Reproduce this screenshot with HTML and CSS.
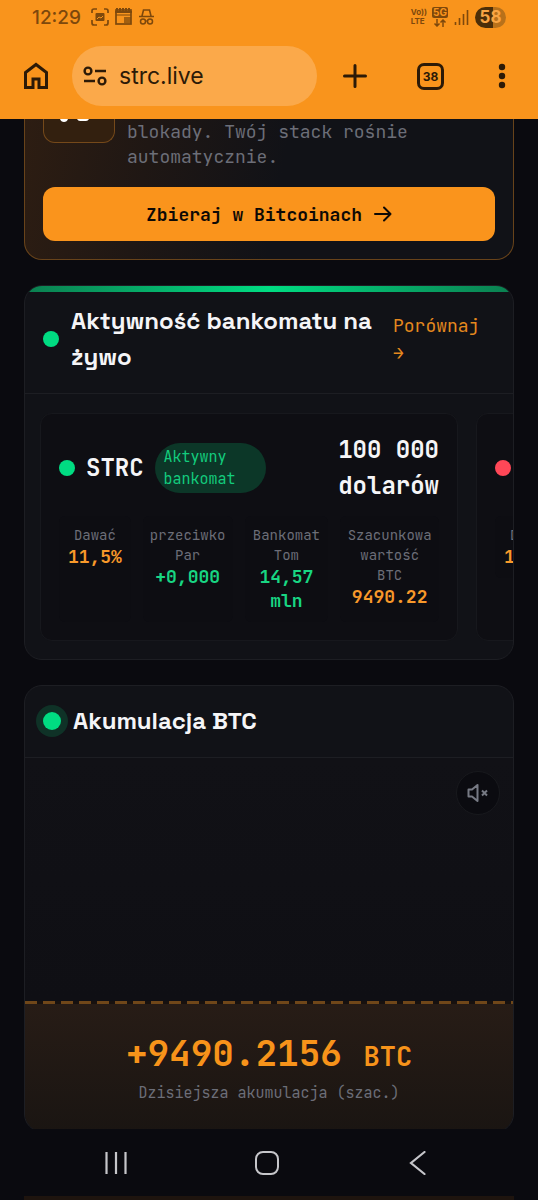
FILE: index.html
```html
<!DOCTYPE html>
<html lang="pl">
<head>
<meta charset="utf-8">
<meta name="viewport" content="width=device-width, initial-scale=1">
<title>strc.live</title>
<link rel="stylesheet" href="styles.css">
</head>
<body>
<div class="phone">
  <header class="browser">
    <div class="status">
      <span class="time">12:29</span>
      <svg class="status-left" width="64" height="20" viewBox="0 0 64 20" fill="none" stroke="currentColor" stroke-width="1.7" aria-hidden="true">
        <path d="M1 6V4q0-2 2-2h3M13 2h2q2 0 2 2v2M17 13v3q0 2-2 2h-2M6 18H3q-2 0-2-2v-3"/>
        <rect x="4.500" y="6" width="9" height="8" rx="1" fill="currentColor" stroke="none"/>
        <path d="M6 12l2-2 2 1 2-2" stroke="#f9941c" stroke-width="1"/>
        <rect x="25" y="3" width="15" height="14"/>
        <path d="M24 5h17M26 1v3M29 1v3M32 1v3M35 1v3M38 1v3" stroke-width="2"/>
        <path d="M25 8h15" stroke-width="1"/>
        <rect x="33" y="10" width="7" height="6" fill="currentColor" fill-opacity=".7" stroke="none"/>
        <path d="M48 9.500h15M51 9l1.500-6h6l1.500 6" stroke-width="1.600"/>
        <circle cx="52" cy="14.500" r="2.500" stroke-width="1.500"/>
        <circle cx="59" cy="14.500" r="2.500" stroke-width="1.500"/>
        <path d="M54 14h3" stroke-width="1.200"/>
      </svg>
      <span class="spacer"></span>
      <span class="volte"><span>Vo))</span><span>LTE</span></span>
      <span class="fiveg">
        <span class="fiveg-tag">5G</span>
        <svg width="14" height="8" viewBox="0 0 14 8" fill="none" stroke="currentColor" stroke-width="1.500" aria-hidden="true"><path d="M4 0v7M1.500 4.500L4 7l2.500-2.500M10 8V1M7.500 3.500L10 1l2.500 2.500"/></svg>
      </span>
      <svg class="signal" width="15" height="16" viewBox="0 0 15 16" fill="none" stroke="currentColor" stroke-width="1.600" aria-hidden="true"><path d="M1.500 16v-3M5.500 16V9M9.500 16V5M13.500 16V1"/></svg>
      <span class="battery">58</span>
    </div>
    <div class="toolbar">
      <button class="icon-btn" type="button" aria-label="Strona główna">
        <svg width="26" height="28" viewBox="0 0 26 28" fill="none" stroke="currentColor" stroke-width="3" aria-hidden="true"><path d="M2.500 25.500V10.500L13 2.500l10.500 8v15H16v-8.500h-6v8.500z"/></svg>
      </button>
      <button class="address" type="button">
        <svg width="24" height="20" viewBox="0 0 24 20" fill="none" stroke="currentColor" stroke-width="2.400" aria-hidden="true"><circle cx="5" cy="5" r="3.400"/><path d="M12 5h11M1 15h11"/><circle cx="19" cy="15" r="3.400"/></svg>
        <span>strc.live</span>
      </button>
      <button class="icon-btn" type="button" aria-label="Nowa karta">
        <svg width="24" height="24" viewBox="0 0 24 24" stroke="currentColor" stroke-width="3" stroke-linecap="round" aria-hidden="true"><path d="M12 1.500v21M1.500 12h21"/></svg>
      </button>
      <button class="tabs" type="button" aria-label="Karty: 38">38</button>
      <button class="icon-btn" type="button" aria-label="Menu">
        <svg width="8" height="26" viewBox="0 0 8 26" fill="currentColor" aria-hidden="true"><circle cx="4" cy="4" r="3.200"/><circle cx="4" cy="13" r="3.200"/><circle cx="4" cy="22" r="3.200"/></svg>
      </button>
    </div>
  </header>

  <main class="content">
    <section class="card promo">
      <div class="promo-row">
        <div class="promo-icon">
          <svg width="36" height="4" viewBox="0 0 36 4" fill="#fff" aria-hidden="true"><path d="M0 0h8q-1 3-4 3t-4-3zM17 0h12q-1 2-3 2h-6q-2 0-3-2z"/></svg>
        </div>
        <p class="promo-text">blokady. Twój stack rośnie automatycznie.</p>
      </div>
      <button class="cta" type="button">
        <span>Zbieraj w Bitcoinach</span>
        <svg width="18" height="16" viewBox="0 0 18 16" fill="none" stroke="currentColor" stroke-width="2" stroke-linecap="round" stroke-linejoin="round" aria-hidden="true"><path d="M1 8h15.500M10 1.500L16.500 8 10 14.500"/></svg>
      </button>
    </section>

    <section class="card activity">
      <div class="card-head">
        <span class="dot"></span>
        <h2 class="title">Aktywność bankomatu na żywo</h2>
        <a class="compare" href="#">Porównaj →</a>
      </div>
      <div class="scroller">
        <article class="ticker">
          <div class="ticker-head">
            <span class="dot"></span>
            <span class="symbol">STRC</span>
            <span class="pill">Aktywny bankomat</span>
            <span class="amount">100 000 dolarów</span>
          </div>
          <dl class="metrics">
            <div class="metric"><dt>Dawać</dt><dd class="orange">11,5%</dd></div>
            <div class="metric"><dt>przeciwko Par</dt><dd class="green">+0,000</dd></div>
            <div class="metric"><dt>Bankomat Tom</dt><dd class="green">14,57 mln</dd></div>
            <div class="metric"><dt>Szacunkowa wartość BTC</dt><dd class="orange">9490.22</dd></div>
          </dl>
        </article>
        <article class="ticker">
          <div class="ticker-head">
            <span class="dot red"></span>
          </div>
          <dl class="metrics">
            <div class="metric"><dt>Dawać</dt><dd class="orange">10,0%</dd></div>
          </dl>
        </article>
      </div>
    </section>

    <section class="card accumulation">
      <div class="card-head">
        <span class="dot halo"></span>
        <h2 class="title">Akumulacja BTC</h2>
      </div>
      <div class="stage">
        <button class="mute" type="button" aria-label="Włącz dźwięk">
          <svg width="22" height="20" viewBox="0 0 22 20" fill="none" stroke="currentColor" stroke-width="2" stroke-linejoin="round" aria-hidden="true"><path d="M1.500 6.500H5L10.500 2v16L5 13.500H1.500z"/><path d="M15 7.500l5 5M20 7.500l-5 5"/></svg>
        </button>
      </div>
      <div class="dashes"></div>
      <div class="total">
        <div class="total-value">+9490.2156 <span class="unit">BTC</span></div>
        <div class="total-label">Dzisiejsza akumulacja (szac.)</div>
      </div>
    </section>
  </main>

  <nav class="system-nav">
    <button class="nav-btn" type="button" aria-label="Ostatnie">
      <svg width="24" height="24" viewBox="0 0 24 24" stroke="currentColor" stroke-width="2.200" aria-hidden="true"><path d="M2.500 1v22M12 1v22M21.500 1v22"/></svg>
    </button>
    <button class="nav-btn" type="button" aria-label="Ekran główny">
      <svg width="24" height="24" viewBox="0 0 24 24" fill="none" stroke="currentColor" stroke-width="2" aria-hidden="true"><rect x="1" y="1" width="22" height="22" rx="7"/></svg>
    </button>
    <button class="nav-btn" type="button" aria-label="Wstecz">
      <svg width="24" height="24" viewBox="0 0 24 24" fill="none" stroke="currentColor" stroke-width="2.200" stroke-linecap="round" aria-hidden="true"><path d="M18.500 1L5 12l13.500 11"/></svg>
    </button>
  </nav>
  <div class="underlay"></div>
</div>
</body>
</html>
```
FILE: styles.css
```css
* { box-sizing: border-box; }

:root {
  --bg: #0a0a0f;
  --card: #111217;
  --inner: #0e0e13;
  --line: #1d1e23;
  --orange: #f7931a;
  --green: #00dc82;
  --muted: #6c6e78;
  --mono: "JetBrains Mono", "DejaVu Sans Mono", monospace;
  --sans: "Space Grotesk", Inter, sans-serif;
}

body {
  margin: 0;
  background: var(--bg);
  color: #f5f5f7;
  font-family: var(--mono);
}

button {
  margin: 0;
  padding: 0;
  border: 0;
  background: none;
  color: inherit;
  font: inherit;
}

svg { display: block; flex: none; }

.phone {
  display: flex;
  flex-direction: column;
  height: 100vh;
}

/* browser chrome */
.browser {
  flex: none;
  background: #f9941c;
  color: #2c1a07;
  font-family: Inter, sans-serif;
  padding-bottom: 13px;
}

.status {
  display: flex;
  align-items: center;
  height: 34px;
  padding: 0 32px;
  color: #7d480c;
}

.time { font-size: 19px; font-weight: 500; margin-right: 10px; }
.spacer { flex: 1; }

.volte {
  display: flex;
  flex-direction: column;
  font-size: 8px;
  line-height: 9px;
  font-weight: 700;
  margin-right: 5px;
}

.fiveg {
  display: flex;
  flex-direction: column;
  align-items: center;
  margin-right: 6px;
}

.fiveg-tag {
  width: 16px;
  height: 11px;
  margin-bottom: 1px;
  border-radius: 2px;
  background: #7d480c;
  color: #f9941c;
  font-size: 10px;
  line-height: 11px;
  font-weight: 700;
  text-align: center;
}

.signal { margin-right: 6px; }

.battery {
  width: 31px;
  height: 21px;
  border-radius: 11px;
  background: linear-gradient(90deg, #4c2e08 58%, #b8711a 58%);
  color: #f9a544;
  font-size: 17px;
  line-height: 21px;
  font-weight: 700;
  text-align: center;
}

.toolbar {
  display: flex;
  align-items: center;
  height: 72px;
  padding: 12px 32px 0 23px;
}

.icon-btn { display: flex; }

.address {
  flex: 1;
  display: flex;
  align-items: center;
  gap: 12px;
  height: 60px;
  margin: 0 26px 0 23px;
  padding: 0 11px;
  border-radius: 30px;
  background: #fba94a;
  font-size: 23px;
}

.tabs {
  width: 27px;
  height: 27px;
  margin: 0 54px 0 50px;
  border: 3px solid currentColor;
  border-radius: 7px;
  font-size: 12px;
  line-height: 21px;
  font-weight: 700;
}

/* page */
.content {
  flex: 1;
  min-height: 0;
  overflow: hidden;
  display: flex;
  flex-direction: column;
  gap: 25px;
  padding: 0 24px;
}

.card {
  position: relative;
  flex: none;
  overflow: hidden;
  border: 1px solid var(--line);
  border-radius: 18px;
  background: var(--card);
}

.promo {
  border-color: #68431a;
  border-top: 0;
  border-radius: 0 0 18px 18px;
  padding: 0 18px 18px;
  background: linear-gradient(100deg, #2d1d12 0%, #1f1714 25%, #111217 52%);
}

.promo-row {
  display: flex;
  align-items: flex-start;
  gap: 12px;
  padding-bottom: 18px;
}

.promo-icon {
  flex: none;
  display: flex;
  width: 72px;
  height: 24px;
  padding-left: 16px;
  border: 1px solid #75491a;
  border-top: 0;
  border-radius: 0 0 12px 12px;
  background: #33200f;
}

.promo-text {
  margin: 0;
  font-size: 18px;
  line-height: 25px;
  color: var(--muted);
}

.cta {
  display: flex;
  align-items: center;
  justify-content: center;
  gap: 12px;
  width: 100%;
  height: 54px;
  border-radius: 12px;
  background: #fa941c;
  color: #0d0905;
  font-size: 18px;
  font-weight: 700;
}

.activity::before {
  content: "";
  position: absolute;
  inset: 0 0 auto;
  height: 6px;
  background: linear-gradient(90deg, #0b7f50, #00dc82 50%, #0b7f50);
}

.card-head {
  display: flex;
  align-items: center;
  gap: 12px;
  padding: 17px 18px 18px;
  border-bottom: 1px solid var(--line);
}

.dot {
  flex: none;
  width: 16px;
  height: 16px;
  border-radius: 50%;
  background: var(--green);
}

.dot.red { background: #ff4757; }

.dot.halo {
  width: 18px;
  height: 18px;
  box-shadow: 0 0 0 7px #0f3227;
}

.title {
  flex: 1;
  margin: 0;
  font-family: var(--sans);
  font-size: 24px;
  line-height: 36px;
  font-weight: 600;
}

.compare {
  flex: none;
  width: 102px;
  font-size: 18px;
  line-height: 27px;
  color: #e5891e;
  text-decoration: none;
}

.scroller {
  display: flex;
  gap: 18px;
  padding: 19px 15px 18px;
  overflow: hidden;
}

.ticker {
  flex: none;
  width: 418px;
  padding: 18px;
  border: 1px solid #17181d;
  border-radius: 12px;
  background: var(--inner);
}

.ticker-head {
  display: flex;
  align-items: center;
  gap: 11px;
  min-height: 72px;
}

.symbol { font-size: 24px; line-height: 36px; font-weight: 700; }

.pill {
  width: 111px;
  padding: 3px 9px;
  border-radius: 26px;
  background: #0c3728;
  color: #13cc7d;
  font-size: 15px;
  line-height: 22px;
}

.amount {
  width: 102px;
  margin-left: auto;
  font-size: 24px;
  line-height: 36px;
  font-weight: 700;
  text-align: right;
}

.metrics {
  display: grid;
  grid-template-columns: 72fr 90fr 84fr 99fr;
  gap: 12px;
  margin: 12px 0 0;
}

.metric {
  padding: 9px 6px;
  border-radius: 6px;
  background: #0d0d12;
  text-align: center;
}

.metric dt {
  font-size: 14px;
  line-height: 20px;
  color: var(--muted);
}

.metric dd {
  margin: 0;
  font-size: 18px;
  line-height: 24px;
  font-weight: 700;
}

.orange { color: #f8992a; }
.green { color: #18d683; }

.stage {
  position: relative;
  height: 243px;
  background: linear-gradient(#111116, #0f0f14);
}

.mute {
  position: absolute;
  top: 13px;
  right: 13px;
  display: flex;
  align-items: center;
  justify-content: center;
  width: 44px;
  height: 44px;
  border: 1px solid #18191d;
  border-radius: 50%;
  background: #0b0b10;
  color: #777a84;
}

.dashes {
  height: 3px;
  background: repeating-linear-gradient(90deg, #704719 0 12px, #17110f 12px 18px);
}

.total {
  padding: 22px 12px 28px;
  background: linear-gradient(#271c16, #1a1512);
  text-align: center;
}

.total-value {
  font-size: 36px;
  line-height: 54px;
  font-weight: 700;
  color: var(--orange);
}

.unit { font-size: 27px; }

.total-label {
  font-size: 15px;
  line-height: 20px;
  color: var(--muted);
}

/* system navigation */
.system-nav {
  flex: none;
  display: grid;
  grid-template-columns: repeat(3, 1fr);
  justify-items: center;
  padding: 0 45px 0 40px;
  height: 67px;
  background: var(--bg);
  color: #c6c6ca;
}

.nav-btn { display: flex; align-items: center; }

.underlay {
  flex: none;
  height: 4px;
  margin: 0 24px;
  background: #1e140e;
}
```
